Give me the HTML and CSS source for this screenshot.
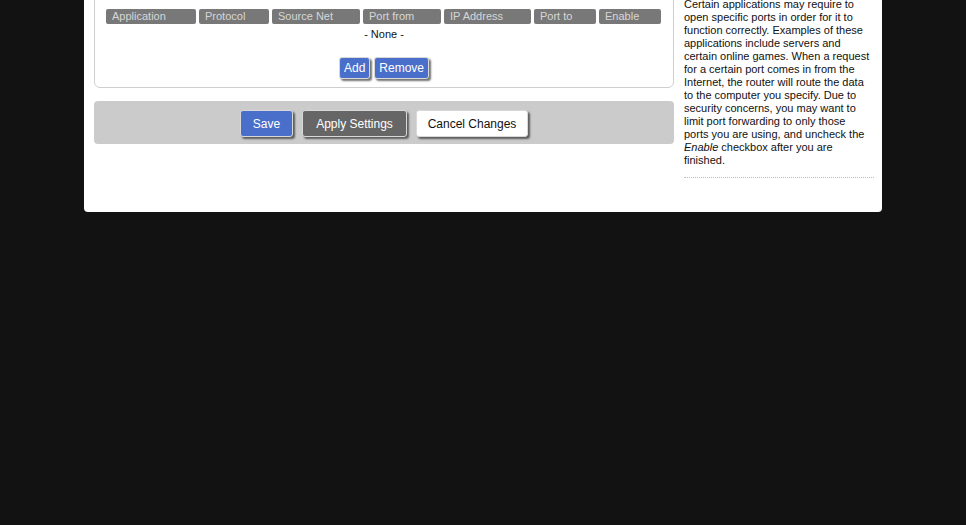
FILE: index.html
```html
<!DOCTYPE html>
<html lang="en">

<head>
    <meta charset="UTF-8">
    <meta name="viewport" content="width=device-width, initial-scale=1.0">
    <title>Port Forwarding</title>
    <link rel="stylesheet" href="styles.css">
</head>

<body>
    <div class="page">
        <div class="panel">
            <main class="main">
                <fieldset class="box">
                    <div class="head-row">
                        <span class="cell c-app">Application</span>
                        <span class="cell c-proto">Protocol</span>
                        <span class="cell c-src">Source Net</span>
                        <span class="cell c-from">Port from</span>
                        <span class="cell c-ip">IP Address</span>
                        <span class="cell c-to">Port to</span>
                        <span class="cell c-en">Enable</span>
                    </div>
                    <div class="empty">- None -</div>
                    <div class="row-btns">
                        <button type="button" class="btn blue small">Add</button>
                        <button type="button" class="btn blue small">Remove</button>
                    </div>
                </fieldset>

                <div class="submit-bar">
                    <button type="button" class="btn blue big save">Save</button>
                    <button type="button" class="btn dark big">Apply Settings</button>
                    <button type="button" class="btn light big">Cancel Changes</button>
                </div>
            </main>

            <aside class="side">
                <p class="help">Certain applications may require to open specific ports in order for it to
                    function correctly. Examples of these applications include servers and certain online
                    games. When a request for a certain port comes in from the Internet, the router will
                    route the data to the computer you specify. Due to security concerns, you may want to
                    limit port forwarding to only those ports you are using, and uncheck the
                    <i>Enable</i> checkbox after you are finished.</p>
            </aside>
        </div>
    </div>
</body>

</html>
```

FILE: styles.css
```css
body {
    margin: 0;
    padding: 0;
    background-color: #121212;
    font-family: "Liberation Sans", Arial, sans-serif;
    font-size: 11px;
    color: #111;
}

.page {
    width: 798px;
    margin: 0 auto;
}

.panel {
    display: flex;
    height: 212px;
    background-color: #fff;
    border-radius: 0 0 4px 4px;
}

.main {
    width: 580px;
    margin-left: 10px;
    margin-top: -30px;
}

.box {
    margin: 0;
    padding: 38px 11px 8px;
    border: 1px solid #cfcfcf;
    border-radius: 6px;
    min-width: 0;
}

.head-row {
    display: flex;
    gap: 3px;
}

.cell {
    display: block;
    height: 15px;
    line-height: 15px;
    padding-left: 6px;
    box-sizing: border-box;
    background-color: #787878;
    color: #d6d6d6;
    font-size: 11px;
    border-radius: 2px;
}

.c-app { width: 90px; }
.c-proto { width: 70px; }
.c-src { width: 88px; }
.c-from { width: 78px; }
.c-ip { width: 87px; }
.c-to { width: 62px; }
.c-en { width: 62px; }

.empty {
    text-align: center;
    height: 13px;
    line-height: 13px;
    margin-top: 4px;
    font-size: 11px;
}

.row-btns {
    display: flex;
    justify-content: center;
    gap: 4px;
    margin-top: 16px;
}

.btn {
    font-family: "Liberation Sans", Arial, sans-serif;
    border: 1px solid #d8d8d8;
    border-radius: 3px;
    cursor: pointer;
    padding: 0 7px;
    box-shadow: 2px 2px 2px rgba(0, 0, 0, 0.55);
}

.blue {
    background-color: #4a6fcb;
    color: #fff;
}

.dark {
    background-color: #666;
    color: #fff;
}

.light {
    background-color: #fff;
    color: #111;
}

.small {
    height: 22px;
    font-size: 12px;
    padding: 0 4px;
}

.big {
    height: 27px;
    font-size: 12px;
}

.save {
    width: 53px;
}

.dark {
    width: 105px;
}

.light {
    width: 112px;
}

.submit-bar {
    display: flex;
    justify-content: center;
    gap: 9px;
    margin-top: 13px;
    padding: 9px 0 7px;
    background-color: #cbcbcb;
    border-radius: 4px;
}

.side {
    width: 186px;
    margin-left: 10px;
}

.help {
    margin: -2px -4px 0 0;
    padding: 0 4px 10px 0;
    line-height: 13px;
    border-bottom: 1px dotted #bbb;
}
```
